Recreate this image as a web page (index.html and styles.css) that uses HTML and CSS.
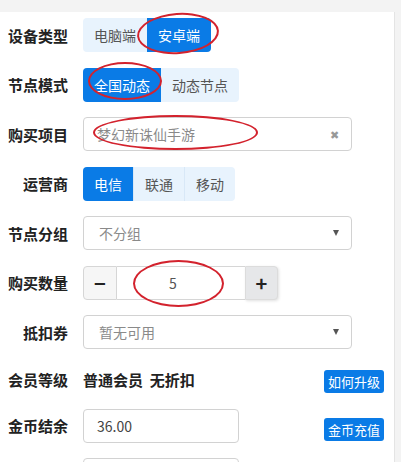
FILE: index.html
```html
<!DOCTYPE html>
<html lang="zh">
<head>
<meta charset="utf-8">
<link rel="stylesheet" href="styles.css">
</head>
<body>
<div class="card">
  <div class="row">
    <div class="label">设备类型</div>
    <div class="group">
      <span class="opt">电脑端</span><span class="opt on">安卓端</span>
    </div>
  </div>
  <div class="row">
    <div class="label">节点模式</div>
    <div class="group">
      <span class="opt on">全国动态</span><span class="opt">动态节点</span>
    </div>
  </div>
  <div class="row">
    <div class="label">购买项目</div>
    <div class="field wide">
      <span class="val muted">梦幻新诛仙手游</span>
      <span class="clear">✖</span>
    </div>
  </div>
  <div class="row">
    <div class="label">运营商</div>
    <div class="group">
      <span class="opt on">电信</span><span class="opt sep">联通</span><span class="opt">移动</span>
    </div>
  </div>
  <div class="row">
    <div class="label">节点分组</div>
    <div class="field wide sel">
      <span class="val muted">不分组</span>
      <span class="caret"></span>
    </div>
  </div>
  <div class="row">
    <div class="label">购买数量</div>
    <div class="stepper">
      <span class="minus">−</span><span class="num">5</span><span class="plus">+</span>
    </div>
  </div>
  <div class="row">
    <div class="label">抵扣券</div>
    <div class="field wide sel">
      <span class="val muted">暂无可用</span>
      <span class="caret"></span>
    </div>
  </div>
  <div class="row short">
    <div class="label">会员等级</div>
    <div class="info">普通会员&nbsp;&nbsp;无折扣</div>
    <span class="btn up">如何升级</span>
  </div>
  <div class="row">
    <div class="label">金币结余</div>
    <div class="field narrow"><span class="val">36.00</span></div>
    <span class="btn down">金币充值</span>
  </div>
  <div class="row">
    <div class="label"></div>
    <div class="field narrow"><span class="val"></span></div>
  </div>

  <div class="mark m1"></div>
  <div class="mark m2"></div>
  <div class="mark m3"></div>
  <div class="mark m4"></div>
</div>
</body>
</html>
```

FILE: styles.css
```css
html, body {
  margin: 0;
  padding: 0;
  background: #f3f3f3;
  font-family: "Noto Sans CJK SC", "Microsoft YaHei", sans-serif;
  overflow: hidden;
}
.card {
  position: relative;
  margin-top: 12px;
  width: 395px;
  box-sizing: border-box;
  background: #fff;
  border-right: 1px solid #e4e4e4;
  padding: 6px 10px 40px 8px;
}
.row {
  display: flex;
  align-items: center;
  height: 34px;
  margin-bottom: 15.5px;
}
.row.short { height: 29px; margin-bottom: 15px; }
.label {
  width: 60px;
  margin-right: 15px;
  text-align: right;
  font-size: 15px;
  font-weight: bold;
  color: #222;
  white-space: nowrap;
  flex: none;
}
.group {
  display: flex;
  height: 34px;
  border-radius: 4px;
  overflow: hidden;
}
.opt {
  display: flex;
  align-items: center;
  padding: 0 11px;
  font-size: 14px;
  color: #555;
  background: #e8f3fd;
}
.opt.sep { border-left: 1px solid #d8e8f7; border-right: 1px solid #d8e8f7; }
.opt.on {
  background: #0a7be6;
  color: #fff;
}
.field {
  display: flex;
  align-items: center;
  height: 34px;
  box-sizing: border-box;
  border: 1px solid #d2d2d2;
  border-radius: 4px;
  padding: 0 12px 0 13px;
  font-size: 14px;
  color: #444;
}
.field.wide { width: 269px; }
.field.narrow { width: 156px; }
.field.sel { padding-left: 15px; }
.val { flex: 1; }
.muted { color: #8a8a8a; }
.clear {
  font-size: 11px;
  color: #999;
}
.caret {
  width: 0;
  height: 0;
  border-left: 3.5px solid transparent;
  border-right: 3.5px solid transparent;
  border-top: 6px solid #555;
}
.stepper {
  display: flex;
  height: 34px;
}
.stepper span {
  display: flex;
  align-items: center;
  justify-content: center;
  box-sizing: border-box;
  border: 1px solid #d6d6d6;
}
.minus {
  width: 34px;
  background: #f6f6f6;
  border-radius: 4px 0 0 4px;
  font-size: 20px;
  font-weight: bold;
  color: #222;
}
.num {
  width: 128px;
  border-left: none !important;
  border-right: none !important;
  font-size: 14px;
  color: #555;
  padding-right: 16px;
}
.plus {
  width: 33px;
  background: #e6e7e9;
  border-color: #dcdcdc !important;
  border-radius: 0 4px 4px 0;
  font-size: 20px;
  font-weight: bold;
  color: #222;
  box-shadow: 1px 1px 3px rgba(0,0,0,0.12);
}
.info {
  font-size: 15px;
  font-weight: bold;
  color: #222;
}
.btn {
  margin-left: auto;
  display: flex;
  align-items: center;
  justify-content: center;
  width: 60px;
  height: 23px;
  background: #0a7be6;
  color: #fff;
  border-radius: 3px;
  font-size: 13px;
}
.btn.up { margin-top: 5px; }
.btn.down { margin-top: 8px; }
.mark {
  position: absolute;
  border: 2px solid #d3222d;
  border-radius: 50%;
  box-sizing: border-box;
}
.m1 { left: 137px; top: 1px; width: 82px; height: 41px; transform: rotate(-4deg); }
.m2 { left: 88px; top: 50px; width: 74px; height: 38px; }
.m3 { left: 93px; top: 103px; width: 165px; height: 35px; }
.m4 { left: 133px; top: 248px; width: 91px; height: 47px; }
```
